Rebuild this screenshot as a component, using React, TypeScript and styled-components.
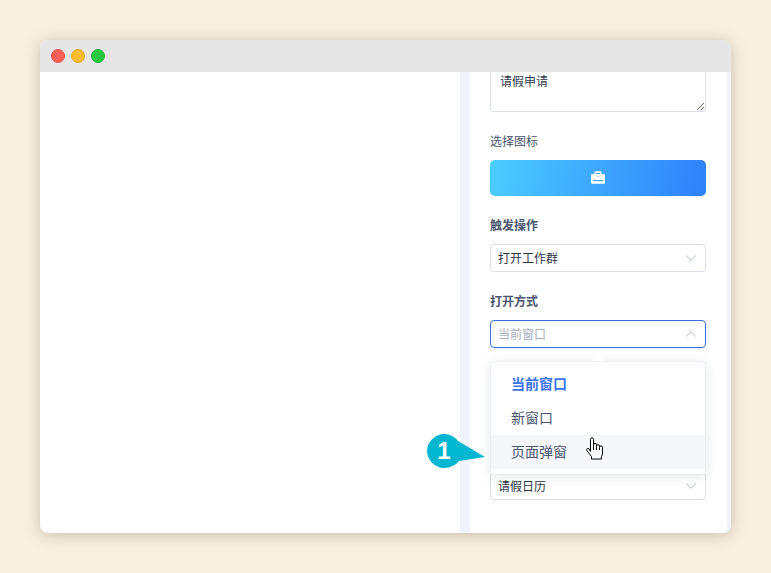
import React from "react";
import styled, { createGlobalStyle } from "styled-components";
import { ChevronDown, ChevronUp } from "lucide-react";

const GlobalStyle = createGlobalStyle`
  html, body {
    margin: 0;
    height: 100%;
    background: #faf0e0;
    font-family: "Noto Sans CJK SC", "Liberation Sans", sans-serif;
  }
`;

const Page = styled.div`
  width: 771px;
  height: 573px;
  padding: 40px;
  box-sizing: border-box;
  overflow: hidden;
`;

const Window = styled.div`
  position: relative;
  width: 691px;
  height: 493px;
  display: flex;
  flex-direction: column;
  border-radius: 8px;
  background: #fff;
  box-shadow: 0 2px 16px rgba(70, 60, 40, 0.28);
`;

const TitleBar = styled.div`
  position: relative;
  z-index: 1;
  flex: 0 0 32px;
  display: flex;
  align-items: center;
  gap: 6px;
  padding: 0 0 0 11px;
  background: #e6e6e6;
  border-radius: 8px 8px 0 0;
`;

const Light = styled.span<{ $color: string; $edge: string }>`
  width: 14px;
  height: 14px;
  box-sizing: border-box;
  border-radius: 50%;
  background: ${(p) => p.$color};
  border: 1px solid ${(p) => p.$edge};
`;

const Body = styled.div`
  flex: 1;
  display: flex;
  min-height: 0;
  border-radius: 0 0 8px 8px;
`;

const Canvas = styled.div`
  flex: 0 0 420px;
`;

const Panel = styled.div`
  flex: 1;
  display: flex;
  flex-direction: column;
  gap: 20px;
  padding: 0 21px 0 20px;
  border-left: 10px solid #f1f4fd;
  border-right: 4px solid #f1f4fd;
  border-radius: 0 0 8px 0;
  min-height: 0;
`;

const Field = styled.div`
  display: flex;
  flex-direction: column;
  gap: 10px;
`;

const Label = styled.div<{ $bold?: boolean }>`
  height: 18px;
  font-size: 12px;
  line-height: 18px;
  color: #4a5570;
  font-weight: ${(p) => (p.$bold ? 700 : 400)};
`;

const NameInput = styled.textarea`
  display: block;
  width: 216px;
  height: 45px;
  margin-top: -5px;
  padding: 5px 9px;
  box-sizing: border-box;
  font: 12px/18px "Noto Sans CJK SC", "Liberation Sans", sans-serif;
  color: #303a52;
  background: #fff;
  border: 1px solid #dcdfe6;
  border-top: none;
  border-radius: 0 0 4px 4px;
  outline: none;
`;

const IconButton = styled.div`
  height: 36px;
  padding-bottom: 2px;
  box-sizing: border-box;
  display: flex;
  align-items: center;
  justify-content: center;
  border-radius: 5px;
  background: linear-gradient(100deg, #4bcdff 0%, #2f80fb 100%);
`;

const SelectWrap = styled.div`
  position: relative;
`;

const SelectText = styled.span`
  padding-bottom: 2px;
`;

const Select = styled.div<{ $open?: boolean; $placeholder?: boolean }>`
  height: 28px;
  box-sizing: border-box;
  display: flex;
  align-items: center;
  justify-content: space-between;
  padding: 0 5px 0 7px;
  background: #fff;
  border: 1px solid ${(p) => (p.$open ? "#3a6fe0" : "#dcdfe6")};
  border-radius: 4px;
  font-size: 12px;
  color: ${(p) => (p.$placeholder ? "#a9b0bf" : "#2c3448")};
  svg {
    color: #c0c4cc;
  }
`;

const Dropdown = styled.div`
  position: absolute;
  z-index: 2;
  top: 41px;
  left: 0;
  right: 0;
  padding: 5px 0;
  background: #fff;
  border: 1px solid #eceef4;
  border-radius: 4px;
  box-shadow: 0 2px 12px rgba(60, 70, 100, 0.12);
  &::before {
    content: "";
    position: absolute;
    top: -7px;
    left: 100px;
    border: 6px solid transparent;
    border-top: none;
    border-bottom-color: #fff;
  }
`;

const Option = styled.div<{ $active?: boolean; $hover?: boolean }>`
  height: 34px;
  padding: 0 0 2px 20px;
  box-sizing: border-box;
  display: flex;
  align-items: center;
  font-size: 14px;
  color: ${(p) => (p.$active ? "#3a74ea" : "#4a5570")};
  font-weight: ${(p) => (p.$active ? 700 : 400)};
  background: ${(p) => (p.$hover ? "#f5f6fa" : "transparent")};
`;

const Pointer = styled.svg`
  position: absolute;
  z-index: 3;
  left: 546px;
  top: 397px;
`;

const Callout = styled.div`
  position: absolute;
  z-index: 3;
  left: 387px;
  top: 394px;
  width: 60px;
  height: 34px;
  display: flex;
  svg {
    position: absolute;
    left: 0;
    top: 0;
  }
`;

const CalloutNumber = styled.span`
  position: relative;
  width: 34px;
  text-align: center;
  font: 700 24px/34px "Liberation Sans", sans-serif;
  color: #fff;
`;

const Chevron = ({ up }: { up?: boolean }) =>
  up ? <ChevronUp size={18} strokeWidth={1.4} /> : <ChevronDown size={18} strokeWidth={1.4} />;

export default function App() {
  return (
    <>
      <GlobalStyle />
      <Page>
        <Window>
          <TitleBar>
            <Light $color="#ff5f57" $edge="#e5524b" />
            <Light $color="#ffbd2e" $edge="#e0a425" />
            <Light $color="#28c940" $edge="#24b339" />
          </TitleBar>
          <Body>
            <Canvas />
            <Panel>
              <NameInput readOnly defaultValue="请假申请" />
              <Field>
                <Label>选择图标</Label>
                <IconButton>
                  <svg width="14" height="13" viewBox="0 0 14 13">
                    <path d="M3.500 3V1.200C3.500.6 3.900.3 4.500.3h5c.6 0 1 .3 1 .9V3h2.500c.5 0 .9.4.9.9v8c0 .5-.4.9-.9.9H1c-.5 0-.9-.4-.9-.9v-8C.1 3.400.5 3 1 3zM5 2v1h4V2z" fill="#fff" fillRule="evenodd" />
                    <rect x="2" y="9" width="10" height="1.200" fill="#4aa3fc" />
                    <rect x="6.400" y="5" width="1.200" height="1.200" fill="#8cc4fd" />
                  </svg>
                </IconButton>
              </Field>
              <Field>
                <Label $bold>触发操作</Label>
                <Select>
                  <SelectText>打开工作群</SelectText>
                  <Chevron />
                </Select>
              </Field>
              <Field>
                <Label $bold>打开方式</Label>
                <SelectWrap>
                  <Select $open $placeholder>
                    <SelectText>当前窗口</SelectText>
                    <Chevron up />
                  </Select>
                  <Dropdown>
                    <Option $active>当前窗口</Option>
                    <Option>新窗口</Option>
                    <Option $hover>页面弹窗</Option>
                  </Dropdown>
                </SelectWrap>
              </Field>
              <Field>
                <Label $bold />
                <Select />
              </Field>
              <Field>
                <Label $bold />
                <Select>
                  <SelectText>请假日历</SelectText>
                  <Chevron />
                </Select>
              </Field>
            </Panel>
          </Body>
          <Callout>
            <svg width="60" height="34" viewBox="0 0 60 34">
              <path d="M17 0C23 0 28 3 31 7L58 23 32 27C29 31 23 34 17 34 8 34 0 26 0 17S8 0 17 0Z" fill="#00b6d1" />
            </svg>
            <CalloutNumber>1</CalloutNumber>
          </Callout>
          <Pointer width="18" height="24" viewBox="0 0 18 24">
            <path
              d="M4.500 12V2.400a1.500 1.500 0 0 1 3 0V7.900a1.500 1.500 0 0 1 3 0V9.200a1.500 1.500 0 0 1 3 0v1.200a1.500 1.500 0 0 1 3 0V17l-1 2.500v2.500H5.500v-2.500L.9 13.600a1.400 1.400 0 0 1 2-1.900L4.500 14.500z"
              fill="#fff"
              stroke="#000"
              strokeWidth="1"
              strokeLinejoin="round"
            />
            <path d="M7.500 7.900V13M10.500 9.200V13M13.500 10.400V13" fill="none" stroke="#000" strokeWidth="1" />
          </Pointer>
        </Window>
      </Page>
    </>
  );
}
